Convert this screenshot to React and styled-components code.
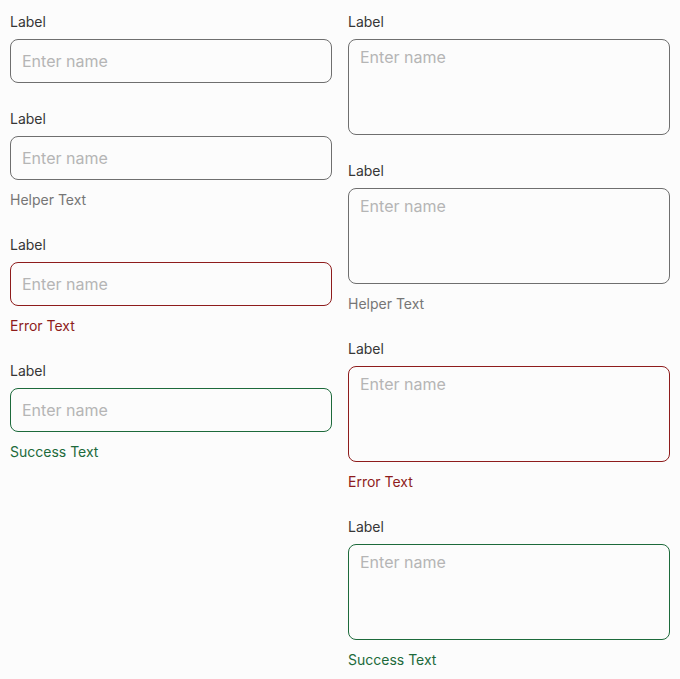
import React from "react";
import styled, { createGlobalStyle, css } from "styled-components";

const GlobalStyle = createGlobalStyle`
  html, body {
    margin: 0;
    padding: 0;
    background: #fcfcfc;
  }
  body {
    font-family: Inter, "Noto Sans", sans-serif;
  }
  * { box-sizing: border-box; }
`;

const tones = {
  neutral: { border: "#6f6f6f", text: "#767676" },
  error: { border: "#8e1c1c", text: "#8e1c1c" },
  success: { border: "#1d6a3b", text: "#1d6a3b" },
};

const Page = styled.main`
  display: grid;
  grid-template-columns: 322px 322px;
  column-gap: 16px;
  align-items: start;
  padding: 11px 10px 10px;
`;

const Column = styled.div`
  display: flex;
  flex-direction: column;
  gap: 25px;
`;

const Field = styled.div`
  display: flex;
  flex-direction: column;
`;

const Label = styled.label`
  font-size: 14px;
  line-height: 20px;
  padding-top: 1px;
  color: #363636;
  margin-bottom: 7px;
`;

const controlBase = css`
  width: 100%;
  font-family: Inter, "Noto Sans", sans-serif;
  font-size: 16px;
  color: #222;
  background: #fcfcfc;
  border: 1px solid ${(p) => tones[p.$tone].border};
  border-radius: 8px;
  outline: none;
  margin: 0;

  &::placeholder {
    color: #b5b5b5;
    opacity: 1;
  }
`;

const TextInput = styled.input`
  ${controlBase}
  height: 44px;
  padding: 0 11px;
`;

const TextArea = styled.textarea`
  ${controlBase}
  display: block;
  height: 96px;
  padding: 7px 11px;
  line-height: normal;
  resize: none;
`;

const Message = styled.span`
  margin-top: 10px;
  margin-bottom: -1px;
  font-size: 14px;
  line-height: 20px;
  color: ${(p) => tones[p.$tone].text};
`;

const variants = [
  { tone: "neutral", message: null },
  { tone: "neutral", message: "Helper Text" },
  { tone: "error", message: "Error Text" },
  { tone: "success", message: "Success Text" },
];

function FormField({ tone, message, multiline, id }) {
  const Control = multiline ? TextArea : TextInput;
  return (
    <Field>
      <Label htmlFor={id}>Label</Label>
      <Control id={id} $tone={tone} placeholder="Enter name" />
      {message && <Message $tone={tone}>{message}</Message>}
    </Field>
  );
}

export default function App() {
  return (
    <>
      <GlobalStyle />
      <Page>
        <Column>
          {variants.map((v, i) => (
            <FormField key={i} id={`in-${i}`} {...v} />
          ))}
        </Column>
        <Column>
          {variants.map((v, i) => (
            <FormField key={i} id={`ta-${i}`} multiline {...v} />
          ))}
        </Column>
      </Page>
    </>
  );
}
